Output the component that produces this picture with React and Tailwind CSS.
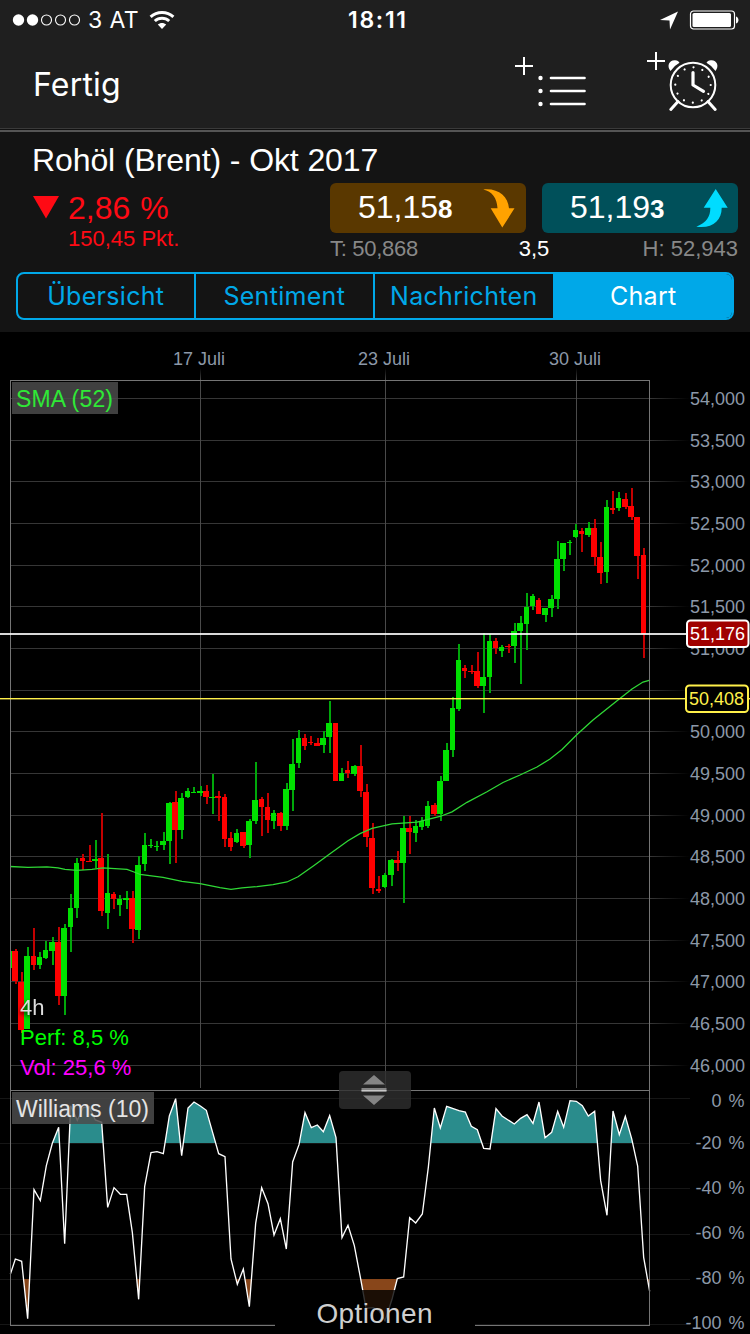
import { useState } from "react";
import clsx from "clsx";

const TABS = ["Übersicht", "Sentiment", "Nachrichten", "Chart"];

// [x, width, bodyTop, bodyBottom, wickTop, wickBottom, up]
const CANDLES = [
  [10, 2, 951, 968, 946, 968, 1],
  [12, 6, 951, 981, 949, 984, 0],
  [18, 6, 982, 1030, 972, 1033, 0],
  [24, 6, 956, 1029, 947, 1029, 1],
  [31, 5, 956, 965, 928, 970, 0],
  [37, 5, 957, 965, 952, 969, 1],
  [43, 5, 950, 958, 941, 959, 1],
  [49, 6, 942, 951, 937, 965, 1],
  [55, 6, 942, 996, 927, 1005, 0],
  [61, 6, 928, 996, 924, 1015, 1],
  [68, 5, 908, 927, 894, 952, 1],
  [74, 5, 863, 908, 858, 918, 1],
  [80, 5, 858, 861, 854, 870, 0],
  [86, 6, 861, 862, 845, 862, 0],
  [92, 6, 859, 861, 840, 868, 1],
  [98, 6, 858, 911, 813, 916, 0],
  [105, 5, 893, 913, 854, 929, 1],
  [111, 5, 894, 899, 892, 909, 0],
  [117, 5, 899, 905, 895, 916, 1],
  [123, 6, 898, 900, 891, 909, 1],
  [129, 6, 898, 929, 891, 943, 0],
  [135, 6, 865, 930, 856, 939, 1],
  [142, 5, 845, 864, 833, 871, 1],
  [148, 5, 845, 846, 839, 848, 1],
  [154, 5, 846, 847, 841, 851, 1],
  [160, 6, 841, 845, 832, 850, 1],
  [166, 6, 803, 841, 802, 864, 1],
  [172, 6, 802, 830, 791, 863, 0],
  [178, 6, 798, 830, 793, 839, 1],
  [185, 5, 791, 797, 788, 798, 1],
  [191, 5, 792, 793, 787, 793, 1],
  [197, 6, 791, 793, 786, 796, 1],
  [203, 6, 791, 797, 785, 804, 0],
  [209, 6, 797, 798, 774, 814, 1],
  [215, 6, 796, 798, 791, 821, 0],
  [222, 5, 797, 839, 794, 847, 0],
  [228, 5, 838, 847, 832, 851, 0],
  [234, 5, 833, 842, 829, 843, 1],
  [240, 6, 832, 846, 832, 848, 0],
  [246, 6, 821, 845, 819, 858, 1],
  [252, 6, 800, 821, 762, 824, 1],
  [259, 5, 799, 807, 797, 836, 0],
  [265, 5, 807, 820, 793, 833, 0],
  [271, 5, 813, 821, 810, 829, 1],
  [277, 6, 813, 826, 812, 831, 0],
  [283, 6, 789, 826, 783, 830, 1],
  [289, 6, 764, 790, 739, 811, 1],
  [296, 5, 738, 763, 730, 768, 1],
  [302, 5, 738, 746, 734, 750, 0],
  [308, 5, 742, 743, 736, 745, 0],
  [314, 6, 743, 746, 738, 746, 0],
  [320, 6, 738, 745, 731, 753, 1],
  [326, 6, 723, 737, 701, 753, 1],
  [333, 5, 723, 781, 723, 781, 0],
  [339, 5, 773, 781, 768, 781, 1],
  [345, 5, 770, 773, 761, 778, 0],
  [351, 6, 766, 774, 765, 776, 1],
  [357, 6, 766, 791, 745, 797, 0],
  [363, 6, 792, 837, 784, 847, 0],
  [369, 6, 838, 888, 823, 894, 0],
  [376, 5, 889, 891, 876, 893, 0],
  [382, 5, 875, 887, 873, 888, 1],
  [388, 6, 860, 875, 859, 886, 1],
  [394, 6, 860, 863, 851, 871, 0],
  [400, 6, 828, 863, 816, 903, 1],
  [406, 6, 828, 832, 816, 854, 0],
  [413, 5, 826, 833, 820, 842, 1],
  [419, 5, 821, 827, 817, 830, 1],
  [425, 5, 806, 826, 801, 828, 1],
  [431, 6, 805, 814, 803, 816, 0],
  [437, 6, 781, 814, 776, 821, 1],
  [443, 6, 750, 781, 743, 781, 1],
  [450, 5, 708, 750, 697, 757, 1],
  [456, 5, 660, 709, 644, 711, 1],
  [462, 5, 668, 671, 665, 678, 0],
  [468, 6, 671, 672, 665, 674, 0],
  [474, 6, 671, 686, 652, 688, 0],
  [480, 6, 677, 686, 633, 713, 1],
  [487, 5, 641, 677, 634, 693, 1],
  [493, 5, 641, 648, 638, 654, 0],
  [499, 5, 647, 651, 645, 657, 1],
  [505, 6, 646, 647, 644, 653, 0],
  [511, 6, 631, 646, 623, 663, 1],
  [517, 6, 623, 631, 616, 684, 1],
  [524, 5, 607, 624, 593, 650, 1],
  [530, 5, 596, 606, 594, 610, 1],
  [536, 5, 600, 614, 598, 614, 0],
  [542, 6, 608, 615, 608, 622, 1],
  [548, 6, 599, 608, 595, 617, 1],
  [554, 6, 559, 599, 541, 609, 1],
  [560, 6, 543, 559, 543, 571, 1],
  [567, 5, 542, 543, 540, 555, 1],
  [573, 5, 530, 537, 524, 538, 1],
  [579, 5, 531, 534, 528, 552, 0],
  [585, 6, 528, 535, 522, 537, 1],
  [591, 6, 528, 557, 519, 566, 0],
  [597, 6, 557, 573, 542, 584, 0],
  [604, 5, 507, 572, 500, 583, 1],
  [610, 5, 508, 510, 491, 514, 0],
  [616, 5, 498, 508, 492, 511, 1],
  [622, 6, 499, 507, 493, 509, 0],
  [628, 6, 506, 517, 488, 520, 0],
  [634, 6, 517, 556, 517, 579, 0],
  [641, 5, 555, 634, 548, 658, 0],
];

const SMA =
  "10,866.5 28,867.3 47,866.8 58,867.8 65,869.4 77,870.4 92,869.4 103,867.8 127,869.4 134,872 140,874.4 163,877.4 182,881.3 200,883.7 220,887.7 231,889.3 242,887.8 257,886.6 273,884.7 287,882 298,876.8 314,865.5 330,853.7 348,840.7 360,833.7 372,828.3 392,823.9 417,822.2 440,816.5 452,811.8 467,802.3 487,791.8 503,782.5 520,775 537,767 550,759 562,749.5 577,734.5 593,720 618,700 632,689 643,682 650,680";

// Williams %R, drawn at three units per pixel
const WILLIAMS =
  "31,643 46,597 65,604 83,776 102,389 121,422 139,317 157,250 176,202 194,551 212,137 232,181 250,142 268,140 286,180 305,187 323,442 342,383 361,403 380,403 397,517 416,718 434,380 453,278 471,275 490,281 508,168 527,116 545,287 564,144 582,126 601,138 619,151 638,218 656,281 675,290 693,597 712,673 730,627 748,740 767,490 785,383 804,431 822,525 841,476 859,567 878,306 897,254 915,158 934,203 952,195 970,215 989,167 1008,233 1026,533 1044,496 1063,557 1082,657 1098,745 1119,743 1137,752 1155,782 1176,718 1192,656 1211,651 1229,473 1247,489 1267,462 1285,322 1303,144 1321,204 1340,139 1377,152 1396,156 1414,199 1432,209 1451,265 1470,267 1488,146 1506,168 1543,192 1562,175 1581,164 1599,190 1617,126 1635,233 1655,217 1673,154 1691,202 1710,122 1729,124 1747,137 1765,168 1784,154 1802,362 1821,466 1839,153 1858,224 1876,169 1895,236 1913,318 1931,592 1949,694";

const PRICE_TICKS = [
  ["54,000", 398], ["53,500", 440], ["53,000", 481], ["52,500", 523], ["52,000", 565], ["51,500", 606],
  ["51,000", 648], ["", 690], ["50,000", 731], ["49,500", 773], ["49,000", 815], ["48,500", 856],
  ["48,000", 898], ["47,500", 940], ["47,000", 981], ["46,500", 1023], ["46,000", 1065],
];

const WILLIAMS_TICKS = [
  ["0 %", 1098, 1106.5], ["-20 %", 1143, 1148.5], ["-40 %", 1188, 1193.5], ["-60 %", 1234, 1239],
  ["-80 %", 1279, 1284], ["-100 %", 1324, 1329],
];

const DATE_TICKS = [["17 Juli", 200], ["23 Juli", 385], ["30 Juli", 576]];

function StatusBar() {
  return (
    <div className="relative flex h-10 items-center justify-between pl-3 pr-[11px] font-['Inter',sans-serif] text-[23px] leading-10">
      <div className="flex items-center">
        <svg width="70" height="14" viewBox="0 0 70 14">
          {[6.5, 20.5, 34.5, 48.5, 62.5].map((cx, i) => (
            <circle key={cx} cx={cx} cy="7" r={i < 2 ? 5.7 : 5} fill={i < 2 ? "#fff" : "none"} stroke="#fff" strokeWidth={i < 2 ? 0 : 1.1} />
          ))}
        </svg>
        <span className="ml-1.5 w-[61px] whitespace-nowrap tracking-[0.4px]">3 AT</span>
        <svg width="26" height="20" viewBox="0 0 26 20" fill="none" stroke="#fff" strokeWidth="3">
          <path d="M1.6 6.8C8 .9 18 .9 24.4 6.8" />
          <path d="M5.8 11C10 7.2 16 7.2 20.2 11" />
          <path d="M13 19 8.8 14.6C11 12.4 15 12.4 17.2 14.6Z" fill="#fff" stroke="none" />
        </svg>
      </div>
      <div className="absolute left-1/2 -ml-[27px] font-semibold tracking-[1.7px]">18:11</div>
      <div className="flex items-center gap-[10px]">
        <svg width="20" height="20" viewBox="0 0 20 20">
          <path d="M1 10 19 1.5 11 19.5 10.5 10.5Z" fill="#fff" />
        </svg>
        <svg width="50" height="20" viewBox="0 0 50 20">
          <rect x="1.5" y="1" width="44" height="18" rx="3" fill="none" stroke="#fff" strokeWidth="1.2" />
          <rect x="3.5" y="3" width="38.5" height="14" rx="1.5" fill="#fff" />
          <path d="M47 6.5C50.3 7.5 50.3 12.5 47 13.5Z" fill="#fff" />
        </svg>
      </div>
    </div>
  );
}

function ListIcon() {
  return (
    <svg width="72" height="60" viewBox="514 54 72 60" stroke="#fff">
      <path d="M515 66H533M524 57V75" strokeWidth="2" />
      {[78, 91, 104].map((y) => (
        <g key={y}>
          <circle cx="540.5" cy={y} r="2.2" fill="#fff" stroke="none" />
          <path d={`M551 ${y}H584.5`} strokeWidth="2.6" strokeLinecap="round" />
        </g>
      ))}
    </svg>
  );
}

function AlarmIcon() {
  return (
    <svg width="74" height="64" viewBox="646 50 74 64" fill="none" stroke="#fff">
      <path d="M647 61H665M656 52V70" strokeWidth="2" />
      <circle cx="693" cy="85" r="22.3" strokeWidth="2" />
      <path d="M670.5 71C666.5 66 669 60.5 674.5 60.3 677 60 679 61.5 679.5 62.8A26 26 0 0 0 670.5 71Z" fill="#fff" stroke="none" />
      <path d="M715.5 71C719.5 66 717 60.5 711.5 60.3 709 60 707 61.5 706.5 62.8A26 26 0 0 1 715.5 71Z" fill="#fff" stroke="none" />
      <path d="M678 101.5 670.8 109.5M708 101.5 715.2 109.5" strokeWidth="3" strokeLinecap="round" />
      <path d="M693 72.5V85L703.5 91.3" strokeWidth="3.2" strokeLinecap="round" strokeLinejoin="round" />
      <circle cx="693" cy="85" r="17.7" strokeWidth="2.2" strokeLinecap="round" strokeDasharray="0.01 9.2577" />
    </svg>
  );
}

function PriceButton({ main, last, up }) {
  return (
    <button className={clsx("flex h-[50px] w-[196px] items-center justify-between rounded-md pl-7", up ? "bg-[#00505a] pr-[9px]" : "bg-[#5a3800] pr-[10px]")}>
      <span className="whitespace-nowrap text-[32px] leading-[50px]">
        {main}
        <b className="text-[26px]">{last}</b>
      </span>
      {up ? (
        <svg width="34" height="40" viewBox="694 186 34 40">
          <path d="M714.7 187 726.7 205.7H720.7C720.7 219 711 227 695.3 224.7 706 221 709.5 214 709.3 205.7H702.7Z" fill="#00dcff" />
        </svg>
      ) : (
        <svg width="34" height="40" viewBox="482 188 34 40">
          <path d="M502.3 227.5 514.5 208.3H509C508 196 498 188 483.3 189.5 492 191.5 497 198 497.5 208.3H490.7Z" fill="#ffa200" />
        </svg>
      )}
    </button>
  );
}

function QuoteHeader({ tab, onTab }) {
  return (
    <section className="h-[200px] bg-[#141414] px-4 pt-2.5">
      <h1 className="pl-4 text-[32px] leading-9 tracking-[-0.1px]">Rohöl (Brent) - Okt 2017</h1>
      <div className="-mr-1 mt-[5px] flex h-[80px] justify-between pl-4">
        <div className="flex text-[#ff0a14]">
          <svg width="28" height="24" viewBox="0 0 28 24" className="mt-[13px]">
            <path d="M1 0H27L14 22.5Z" fill="#ff0a14" />
          </svg>
          <div className="pl-2 pt-[7px]">
            <div className="text-[32px] leading-9 [word-spacing:1px]">2,86 %</div>
            <div className="text-[22px] leading-[25px]">150,45 Pkt.</div>
          </div>
        </div>
        <div className="w-[408px]">
          <div className="flex gap-4">
            <PriceButton main="51,15" last="8" />
            <PriceButton main="51,19" last="3" up />
          </div>
          <div className="mt-[3px] grid grid-cols-3 whitespace-nowrap text-[22px] leading-[26px] text-[#888]">
            <span className="tracking-[-0.3px]">T: 50,868</span>
            <span className="text-center text-white">3,5</span>
            <span className="text-right">H: 52,943</span>
          </div>
        </div>
      </div>
      <div className="mt-[9px] flex h-12 overflow-hidden rounded-lg border-2 border-[#00a8e8] font-['Inter',sans-serif] text-[25px] tracking-[0.3px]">
        {TABS.map((name, i) => (
          <button
            key={name}
            onClick={() => onTab(name)}
            className={clsx(
              "pt-0.5",
              i === 0 ? "w-[176px]" : "w-[180px] border-l-2 border-[#00a8e8]",
              tab === name ? "bg-[#00a8e8] text-white" : "text-[#00a8e8]"
            )}
          >
            {name}
          </button>
        ))}
      </div>
    </section>
  );
}

function Chart() {
  return (
    <svg width="750" height="1002" viewBox="0 332 750 1002" className="block bg-black font-['Liberation_Sans',Arial,sans-serif]">
      <defs>
        <linearGradient id="fadeRight" gradientUnits="userSpaceOnUse" x1="650" y1="0" x2="690" y2="0">
          <stop offset="0" stopColor="#363636" />
          <stop offset="1" stopColor="#000" />
        </linearGradient>
        <linearGradient id="fadeTop" gradientUnits="userSpaceOnUse" x1="0" y1="368" x2="0" y2="381">
          <stop offset="0" stopColor="#000" />
          <stop offset="1" stopColor="#4a4a4a" />
        </linearGradient>
        <clipPath id="overbought"><rect x="31" y="90" width="1919" height="159" /></clipPath>
        <clipPath id="oversold"><rect x="31" y="657" width="1919" height="140" /></clipPath>
      </defs>

      {/* grid */}
      {PRICE_TICKS.map(([label, y]) => (
        <g key={y}>
          <rect x="10" y={y} width="640" height="1" fill="#363636" />
          <rect x="650" y={y} width="40" height="1" fill="url(#fadeRight)" />
          <text x="745" y={y + 7} textAnchor="end" fontSize="18" fill="#8c98a8">{label}</text>
        </g>
      ))}
      {WILLIAMS_TICKS.map(([label, y, ty]) => (
        <g key={y}>
          <rect x="0" y={y} width="690" height="1" fill="#161616" />
          <text x="744.5" y={ty} textAnchor="end" fontSize="18" fill="#8c98a8" className="[word-spacing:2px]">{label}</text>
        </g>
      ))}
      {DATE_TICKS.map(([label, x]) => (
        <g key={x}>
          <rect x={x} y="368" width="1" height="13" fill="url(#fadeTop)" />
          <rect x={x} y="381" width="1" height="707" fill="#4a4a4a" />
          <text x={x - 1} y="365" textAnchor="middle" fontSize="18" fill="#8c98a8">{label}</text>
        </g>
      ))}

      {/* candles */}
      <g shapeRendering="crispEdges">
        {CANDLES.map(([x, w, top, bottom, high, low, up]) => (
          <g key={x}>
            <rect x={w === 2 ? x : x + w - 3} y={high} width={w === 2 ? 1 : 2} height={low - high} fill={up ? "#00a80a" : "#c40000"} />
            <rect x={x} y={top} width={w} height={bottom - top} fill={up ? "#00e000" : "#ff0000"} />
          </g>
        ))}
      </g>
      <polyline points={SMA} fill="none" stroke="#2fd836" strokeWidth="1.3" />

      {/* williams */}
      <g transform="translate(0 1060) scale(0.33333)">
        <polygon points={`31,249 ${WILLIAMS} 1949,249`} fill="#2a8c8c" clipPath="url(#overbought)" />
        <polygon points={`31,657 ${WILLIAMS} 1949,657`} fill="#88461a" clipPath="url(#oversold)" />
        <polyline points={WILLIAMS} fill="none" stroke="#fff" strokeWidth="4" />
      </g>

      {/* frame */}
      <path d="M10 380.5H650M10.5 380V1326M649.5 380V1326M10 1090.5H650M10 1325.5H650" stroke="#757575" fill="none" />

      {/* price levels */}
      <rect x="0" y="633" width="690" height="2" fill="#fff" opacity="0.85" />
      <rect x="0" y="698" width="750" height="1" fill="#fff04a" />
      <rect x="0" y="699" width="750" height="1" fill="#fff04a" opacity="0.4" />
      <rect x="687" y="620.5" width="61.5" height="26.5" rx="3.5" fill="#a00000" stroke="#fff" strokeWidth="2" />
      <text x="745" y="640" textAnchor="end" fontSize="18" fill="#fff">51,176</text>
      <rect x="686" y="685.5" width="62" height="26.5" rx="3.5" fill="#000" stroke="#fff04a" strokeWidth="2" />
      <text x="744" y="705" textAnchor="end" fontSize="18" fill="#fff04a">50,408</text>

      {/* legends */}
      <rect x="12" y="382" width="106" height="32" fill="#4b4b4b" opacity="0.85" />
      <text x="16" y="407" fontSize="23" fill="#2fe836" textLength="97">SMA (52)</text>
      <rect x="12" y="1092" width="142" height="32" fill="#4b4b4b" opacity="0.85" />
      <text x="16" y="1117" fontSize="23" fill="#e4e4e4">Williams (10)</text>
      <text x="20" y="1015" fontSize="22" fill="#dedede" className="drop-shadow-[0_2px_2px_#000]">4h</text>
      <text x="20" y="1045" fontSize="22" fill="#00ff00">Perf: 8,5 %</text>
      <text x="20" y="1075" fontSize="22" fill="#ff00ff">Vol: 25,6 %</text>

      {/* resize handle */}
      <rect x="339" y="1071" width="72" height="38" rx="4" fill="#303030" opacity="0.8" />
      <path d="M374 1075 385 1084.5H363ZM374 1105 385 1095.5H363Z" fill="#858585" />
      <rect x="361.5" y="1088" width="25" height="4" fill="#858585" />
      <rect x="361.5" y="1090" width="25" height="1" fill="#c8c8c8" />

      {/* options drawer */}
      <rect x="275" y="1290" width="200" height="44" fill="#000" opacity="0.8" />
      <rect x="275" y="1324" width="200" height="3" fill="#000" />
      <text x="374.5" y="1323" textAnchor="middle" fontSize="28" fill="#cfcfcf" textLength="116">Optionen</text>
    </svg>
  );
}

export default function App() {
  const [tab, setTab] = useState("Chart");

  return (
    <div className="flex h-[1334px] w-[750px] flex-col overflow-hidden bg-black font-['Liberation_Sans',Arial,sans-serif] text-white">
      <header className="h-[132px] border-b-2 border-[#555] bg-[#1f1f1f]">
        <StatusBar />
        <nav className="flex h-[89px] items-start justify-between border-b border-[#3a3a3a] pl-[33px] pr-[30px]">
          <button className="mt-[25px] font-['Inter',sans-serif] text-[32px] leading-10 tracking-[0.2px]">Fertig</button>
          <div className="flex gap-[60px] pt-[10px]">
            <button className="mt-1"><ListIcon /></button>
            <button><AlarmIcon /></button>
          </div>
        </nav>
        <div className="h-px bg-[#111]" />
      </header>
      <QuoteHeader tab={tab} onTab={setTab} />
      <Chart />
    </div>
  );
}
